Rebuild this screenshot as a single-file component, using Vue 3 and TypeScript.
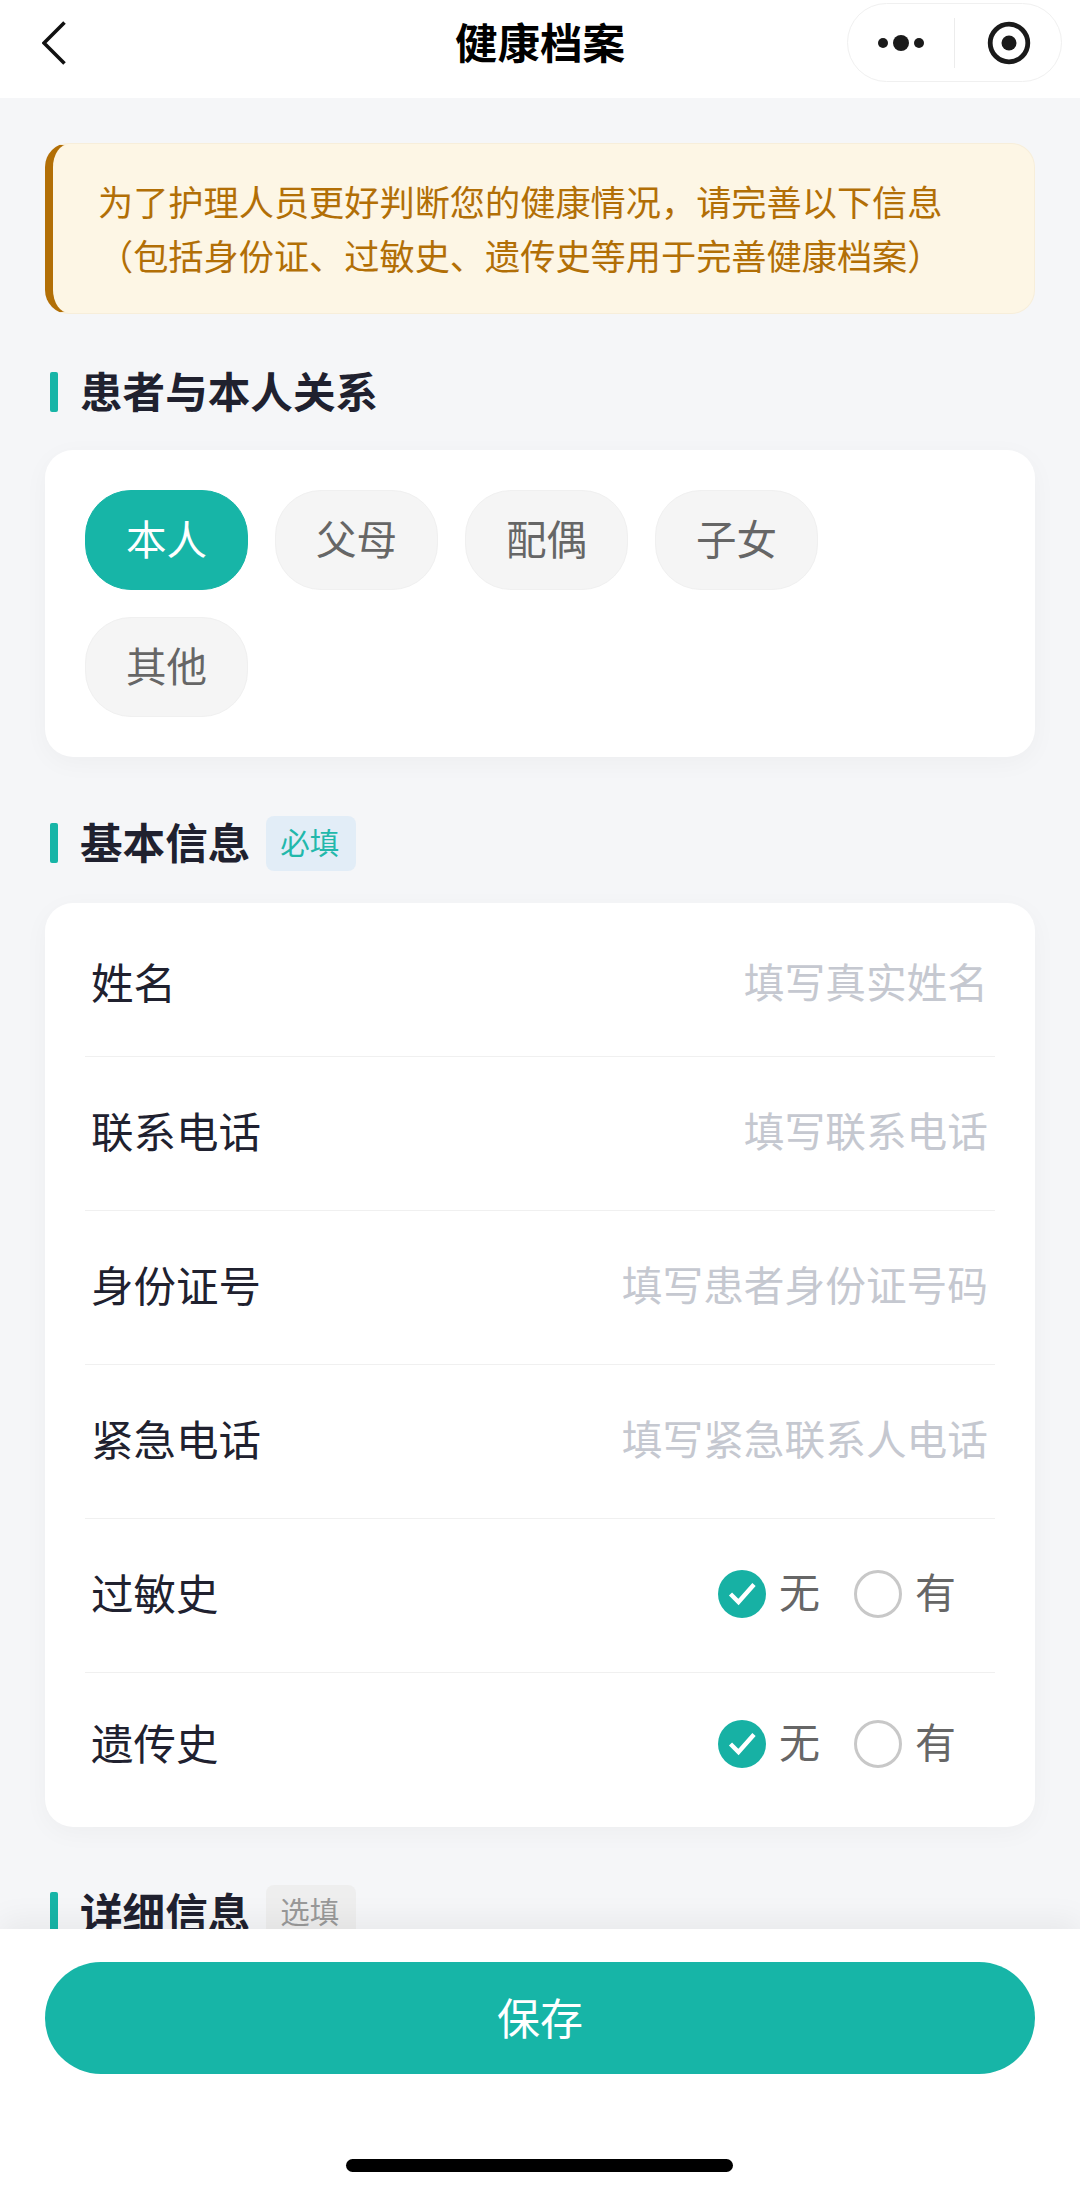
<script setup lang="ts">
interface Field { label: string; placeholder: string }
const relations: string[] = ['本人', '父母', '配偶', '子女', '其他']
const fields: Field[] = [
  { label: '姓名', placeholder: '填写真实姓名' },
  { label: '联系电话', placeholder: '填写联系电话' },
  { label: '身份证号', placeholder: '填写患者身份证号码' },
  { label: '紧急电话', placeholder: '填写紧急联系人电话' },
]
const histories: string[] = ['过敏史', '遗传史']
</script>

<template>
  <div class="page">
    <header class="nav">
      <svg class="back" width="24" height="44" viewBox="0 0 24 44" fill="none">
        <path d="M22.5 1.5 L2 22 L22.5 42.5" stroke="#111" stroke-width="3.6" />
      </svg>
      <h1 class="nav-title">健康档案</h1>
      <div class="capsule">
        <svg class="more" width="60" height="20" viewBox="0 0 60 20">
          <circle cx="12" cy="10" r="5" fill="#1a1a1a" />
          <circle cx="30" cy="10" r="8" fill="#1a1a1a" />
          <circle cx="48" cy="10" r="5" fill="#1a1a1a" />
        </svg>
        <span class="capsule-line"></span>
        <svg class="target" width="44" height="44" viewBox="0 0 44 44" fill="none">
          <circle cx="22" cy="22" r="18.8" stroke="#1a1a1a" stroke-width="4.8" />
          <circle cx="22" cy="22" r="7.5" fill="#1a1a1a" />
        </svg>
      </div>
    </header>

    <main class="content">
      <div class="notice">
        <p>为了护理人员更好判断您的健康情况，请完善以下信息</p>
        <p>（包括身份证、过敏史、遗传史等用于完善健康档案）</p>
      </div>

      <div class="section-head first">
        <span class="bar"></span>
        <h2>患者与本人关系</h2>
      </div>
      <section class="card chips">
        <span v-for="(r, i) in relations" :key="r" class="chip" :class="{ active: i === 0 }">{{ r }}</span>
      </section>

      <div class="section-head">
        <span class="bar"></span>
        <h2>基本信息</h2>
        <span class="tag required">必填</span>
      </div>
      <section class="card form">
        <div v-for="f in fields" :key="f.label" class="row">
          <span class="label">{{ f.label }}</span>
          <span class="placeholder">{{ f.placeholder }}</span>
        </div>
        <div v-for="h in histories" :key="h" class="row check">
          <span class="label">{{ h }}</span>
          <div class="radios">
            <svg width="48" height="48" viewBox="0 0 48 48">
              <circle cx="24" cy="24" r="24" fill="#17b1a4" />
              <path d="M12.5 24 L20.5 32 L36 14.5" fill="none" stroke="#fff" stroke-width="4.4" />
            </svg>
            <span class="opt">无</span>
            <span class="radio-off"></span>
            <span class="opt">有</span>
          </div>
        </div>
      </section>

      <div class="section-head last">
        <span class="bar"></span>
        <h2>详细信息</h2>
        <span class="tag optional">选填</span>
      </div>
    </main>

    <footer class="footer">
      <button class="save" type="button">保存</button>
      <span class="home"></span>
    </footer>
  </div>
</template>

<style scoped>
.page {
  width: 1080px;
  height: 2193px;
  display: flex;
  flex-direction: column;
  overflow: hidden;
  background: #f5f6f8;
  font-family: "Noto Sans CJK SC", "Noto Sans", sans-serif;
}
.nav {
  height: 98px;
  flex: none;
  position: relative;
  display: flex;
  align-items: center;
  justify-content: center;
  background: #fff;
}
.back {
  position: absolute;
  left: 42px;
  top: 21px;
}
.nav-title {
  margin: -18px 0 0;
  font-size: 42.5px;
  font-weight: 700;
  color: #000;
}
.capsule {
  position: absolute;
  left: 847px;
  top: 3px;
  width: 215px;
  height: 79px;
  box-sizing: border-box;
  border: 1px solid #f0f0f0;
  border-radius: 40px;
  display: flex;
  align-items: center;
}
.more {
  margin-left: 23px;
}
.capsule-line {
  width: 1px;
  height: 50px;
  margin-left: 23px;
  background: #ececec;
}
.target {
  margin-left: 32px;
}
.content {
  flex: 1;
  min-height: 0;
  overflow: hidden;
  padding: 45px 45px 0;
}
.notice {
  height: 171px;
  box-sizing: border-box;
  padding: 0 0 2px 45px;
  display: flex;
  flex-direction: column;
  justify-content: center;
  background: #fdf6e5;
  border: 1px solid #f7eeda;
  border-left: 8px solid #b26f06;
  border-radius: 24px;
  color: #b26f06;
  font-size: 35.2px;
  line-height: 54px;
}
.notice p {
  margin: 0;
  white-space: nowrap;
}
.section-head {
  height: 56px;
  margin: 58px 0 32px;
  display: flex;
  align-items: center;
  position: relative;
  padding-left: 5px;
}
.section-head.first {
  margin: 50px 0 30px;
}
.section-head.last {
  margin: 57px 0 0;
}
.bar {
  width: 8px;
  height: 40px;
  border-radius: 2px;
  background: #17b5a7;
}
.section-head h2 {
  margin: 0 0 5px 22px;
  font-size: 42.6px;
  font-weight: 700;
  color: #20212f;
}
.section-head.last h2 {
  margin-bottom: 3px;
}
.tag {
  margin-left: 15.5px;
  width: 90px;
  height: 55px;
  box-sizing: border-box;
  padding: 0 2px 4px 0;
  border-radius: 8px;
  display: flex;
  align-items: center;
  justify-content: center;
  font-size: 29.5px;
}
.tag.required {
  background: #e2edf7;
  color: #22b8ab;
}
.tag.optional {
  background: #eeeeee;
  color: #999;
}
.card {
  background: #fff;
  border-radius: 28px;
  box-shadow: 0 6px 26px rgba(0, 0, 0, 0.035);
}
.chips {
  box-sizing: border-box;
  height: 307px;
  padding: 40px;
  display: flex;
  flex-wrap: wrap;
  align-content: flex-start;
  gap: 27px;
}
.chip {
  width: 163px;
  height: 100px;
  box-sizing: border-box;
  padding-bottom: 6px;
  border: 1px solid #f0f0f0;
  border-radius: 46px;
  background: #f5f5f5;
  color: #666;
  font-size: 40.5px;
  display: flex;
  align-items: center;
  justify-content: center;
}
.chip.active {
  background: #17b5a7;
  border-color: #17b5a7;
  color: #fff;
}
.form {
  padding: 0 40px;
  height: 924px;
  box-sizing: border-box;
}
.row {
  height: 154px;
  box-sizing: border-box;
  border-bottom: 1px solid #f0f0f0;
  padding: 0 7px 0 6px;
  display: flex;
  align-items: center;
  justify-content: space-between;
}
.row:first-child {
  padding-top: 9px;
}
.row.check {
  padding-bottom: 4px;
}
.row:last-child {
  height: 154px;
  padding-bottom: 12px;
  border-bottom: 0;
}
.label {
  padding-bottom: 8px;
  font-size: 42.5px;
  color: #20212f;
}
.check .label {
  padding-bottom: 5px;
}
.placeholder {
  padding-bottom: 8px;
  font-size: 40.7px;
  color: #c5c8d0;
}
.radios {
  display: flex;
  align-items: center;
  margin-right: 32px;
}
.opt {
  margin-left: 13px;
  padding-bottom: 8px;
  font-size: 41px;
  color: #666;
}
.radio-off {
  margin-left: 34px;
  width: 48px;
  height: 48px;
  box-sizing: border-box;
  border: 3px solid #c8c8c8;
  border-radius: 50%;
}
.footer {
  flex: none;
  height: 264px;
  position: relative;
  z-index: 1;
  background: #fff;
  box-shadow: 0 -8px 30px rgba(0, 0, 0, 0.06);
  padding: 33px 45px 0;
  box-sizing: border-box;
}
.save {
  display: block;
  width: 100%;
  height: 112px;
  padding: 0 0 5px;
  border: 0;
  border-radius: 56px;
  background: #17b5a7;
  color: #fff;
  font-family: inherit;
  font-size: 43px;
}
.home {
  position: absolute;
  left: 346px;
  top: 230px;
  width: 387px;
  height: 13px;
  border-radius: 7px;
  background: #000;
}
</style>
